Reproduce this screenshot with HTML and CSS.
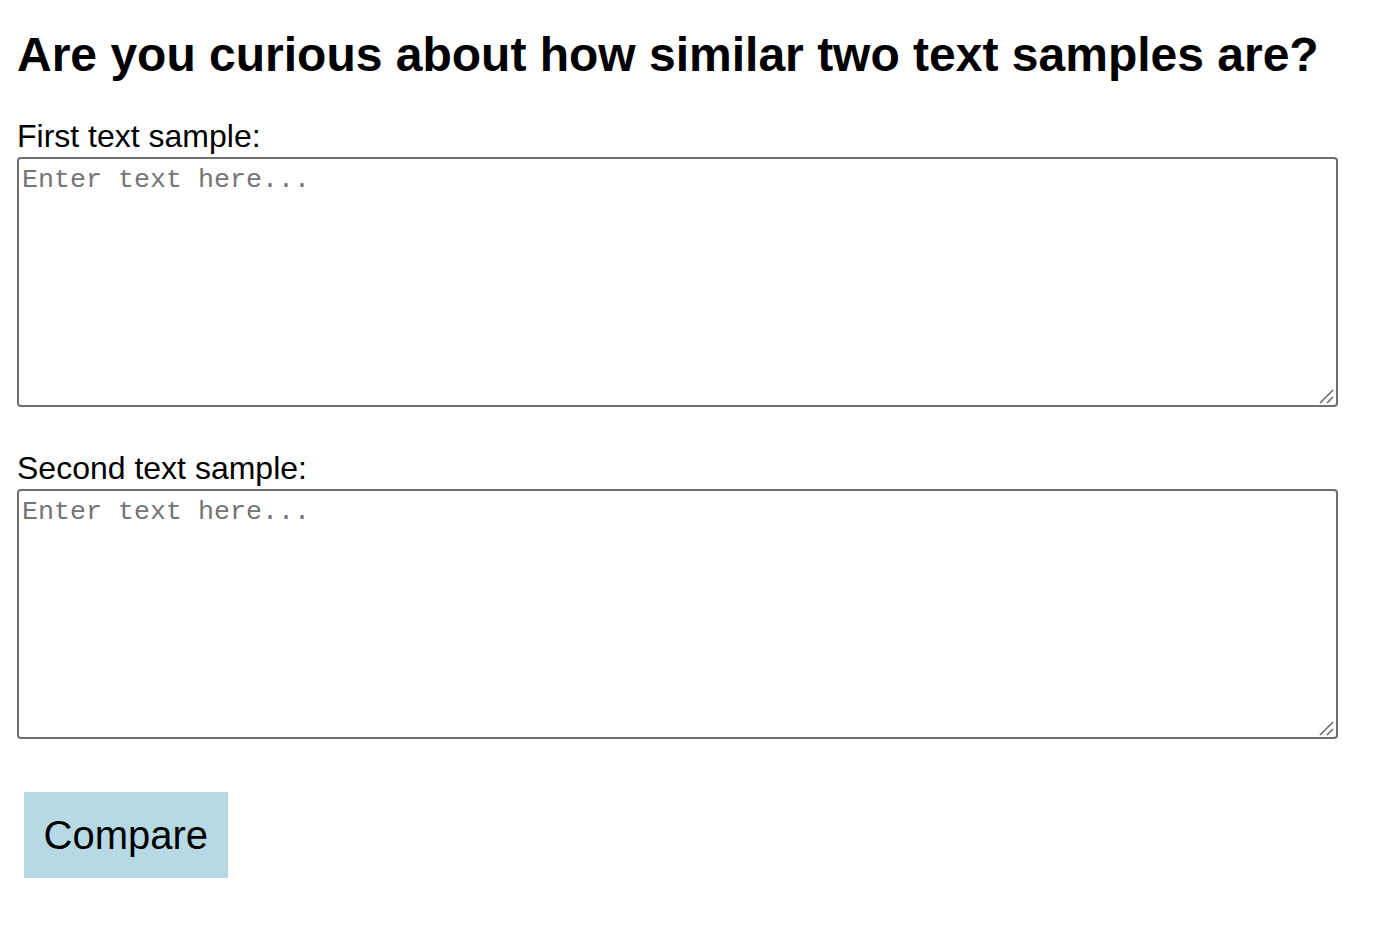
FILE: index.html
```html
<!DOCTYPE html>
<html>
<head>
<meta charset="utf-8">
<link rel="stylesheet" href="styles.css">
</head>
<body>
<div class="page">
  <h1 class="title">Are you curious about how similar two text samples are?</h1>
  <label class="label label-first" for="t1">First text sample:</label>
  <div class="field">
    <textarea id="t1" class="box" placeholder="Enter text here..."></textarea>
    <svg class="grip" width="16" height="16" viewBox="0 0 16 16" aria-hidden="true">
      <line x1="2" y1="15" x2="15" y2="2" />
      <line x1="9" y1="15" x2="15" y2="9" />
    </svg>
  </div>
  <label class="label label-second" for="t2">Second text sample:</label>
  <div class="field">
    <textarea id="t2" class="box" placeholder="Enter text here..."></textarea>
    <svg class="grip" width="16" height="16" viewBox="0 0 16 16" aria-hidden="true">
      <line x1="2" y1="15" x2="15" y2="2" />
      <line x1="9" y1="15" x2="15" y2="9" />
    </svg>
  </div>
  <button class="compare">Compare</button>
</div>
</body>
</html>
```

FILE: styles.css
```css
html, body {
  margin: 0;
  padding: 0;
  background: #ffffff;
}

.page {
  display: flex;
  flex-direction: column;
  align-items: flex-start;
  padding: 27px 0 0 17px;
  font-family: "Liberation Sans", Arial, sans-serif;
  color: #000;
}

.title {
  margin: 0;
  font-size: 48px;
  line-height: 55px;
  font-weight: bold;
}

.label {
  display: block;
  font-size: 32px;
  line-height: 37px;
}

.label-first {
  margin-top: 36px;
}

.label-second {
  margin-top: 43px;
}

.field {
  position: relative;
  margin-top: 2px;
  width: 1321px;
  height: 250px;
}

.box {
  display: block;
  box-sizing: border-box;
  margin: 0;
  width: 1321px;
  height: 250px;
  border: 2px solid #6f6f6f;
  border-radius: 4px;
  padding: 6px 3px;
  font-family: "Liberation Mono", "Courier New", monospace;
  font-size: 26.67px;
  background: #fff;
  resize: none;
}

.box::placeholder {
  color: #757575;
}

.grip {
  position: absolute;
  right: 4px;
  bottom: 3px;
  pointer-events: none;
}

.grip line {
  stroke: #6a6a6a;
  stroke-width: 1.6;
}

.compare {
  margin: 53px 0 0 7px;
  padding: 20px 19.5px;
  border: none;
  background: #b7d9e4;
  font-family: "Liberation Sans", Arial, sans-serif;
  font-size: 40px;
  line-height: 46px;
  color: #000;
}
```
